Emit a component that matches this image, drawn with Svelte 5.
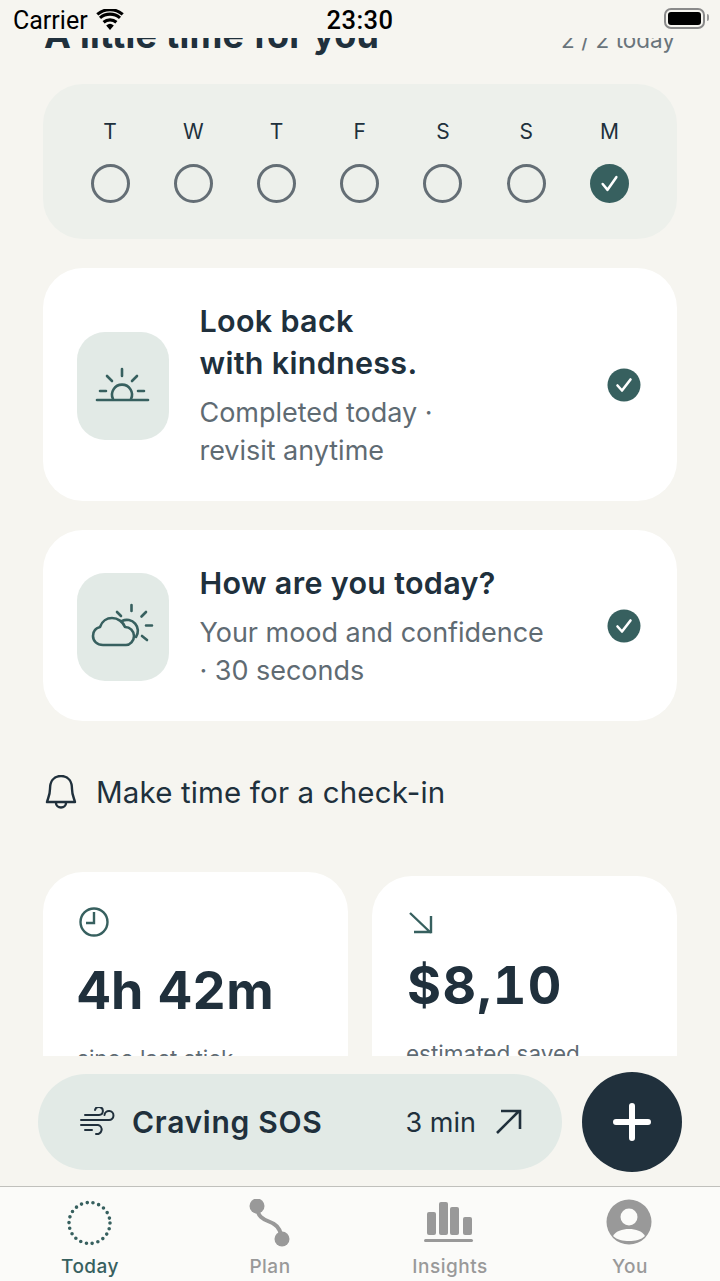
<script>
	const days = [
		{ label: 'T' },
		{ label: 'W' },
		{ label: 'T' },
		{ label: 'F' },
		{ label: 'S' },
		{ label: 'S' },
		{ label: 'M', done: true }
	];
</script>

<div class="phone">
	<header class="status">
		<div class="status-left">
			<span class="carrier">Carrier</span>
			<svg class="wifi" width="28" height="22" viewBox="0 0 28 22">
				<path d="M14 21l-3.800-4.500a5.800 5.800 0 0 1 7.600 0z" fill="#000" />
				<path d="M7.600 13.200a9.800 9.800 0 0 1 12.800 0M4 8.900a15.400 15.400 0 0 1 20 0M1.300 5.400a19.600 19.600 0 0 1 25.400 0" fill="none" stroke="#000" stroke-width="3.200" />
			</svg>
		</div>
		<span class="time">23:30</span>
		<div class="battery"><span class="battery-fill"></span></div>
	</header>

	<main class="scroll">
		<div class="content">
			<div class="section-head">
				<h2>A little time for you</h2>
				<span class="count">2 / 2 today</span>
			</div>

			<section class="week">
				{#each days as day}
					<div class="day">
						<span class="day-label">{day.label}</span>
						{#if day.done}
							<svg width="39" height="39" viewBox="0 0 40 40">
								<circle cx="20" cy="20" r="20" fill="#37605f" />
								<path d="M13 20.500l5 6 9-13" fill="none" stroke="#fff" stroke-width="2.600" stroke-linecap="round" stroke-linejoin="round" />
							</svg>
						{:else}
							<span class="ring"></span>
						{/if}
					</div>
				{/each}
			</section>

			<article class="card first">
				<div class="tile">
					<svg width="64" height="48" viewBox="91 363 64 48" fill="none" stroke="#37605f" stroke-width="2.600" stroke-linecap="round">
						<path d="M97 401H148" />
						<path d="M113 400a10 10 0 1 1 18 0" />
						<path d="M122 370v7M107 377l5 5M137 377l-5 5M100 392h6M138 392h6" />
					</svg>
				</div>
				<div class="card-text">
					<h3>Look back<br />with kindness.</h3>
					<p>Completed today ·<br />revisit anytime</p>
				</div>
				<svg class="check" width="34" height="34" viewBox="0 0 34 34">
					<circle cx="17" cy="17" r="16.500" fill="#37605f" />
					<path d="M10.500 17.500l4.500 5 8.500-11" fill="none" stroke="#fff" stroke-width="2.600" stroke-linecap="round" stroke-linejoin="round" />
				</svg>
			</article>

			<article class="card second">
				<div class="tile">
					<svg width="64" height="48" viewBox="92 603 64 48" fill="none" stroke="#37605f" stroke-width="2.600" stroke-linecap="round" stroke-linejoin="round">
						<path d="M104 645C98 645 94 641 94 636C94 631 97 628 101 627C103 621 108 618 113 618C119 618 124 622 126 627C131 627 135 631 135 636C135 641 131 645 127 645Z" />
						<path d="M123 621A11 11 0 0 1 137 637" />
						<path d="M132.500 605v6M118 612l4 4M147 612l-4.500 4.500M147 625.500h6M143 636l5 4" />
					</svg>
				</div>
				<div class="card-text">
					<h3>How are you today?</h3>
					<p>Your mood and confidence<br />· 30 seconds</p>
				</div>
				<svg class="check" width="34" height="34" viewBox="0 0 34 34">
					<circle cx="17" cy="17" r="16.500" fill="#37605f" />
					<path d="M10.500 17.500l4.500 5 8.500-11" fill="none" stroke="#fff" stroke-width="2.600" stroke-linecap="round" stroke-linejoin="round" />
				</svg>
			</article>

			<div class="reminder">
				<svg width="32" height="34" viewBox="45 775 32 34" fill="none" stroke="#20303c" stroke-width="2.400" stroke-linejoin="round" stroke-linecap="round">
					<path d="M61 776C53 776 50 782 50 789C50 795 48 798 47 802H75C74 798 72 795 72 789C72 782 69 776 61 776Z" />
					<path d="M56 803a5 4.500 0 0 0 10 0" />
				</svg>
				<span>Make time for a check-in</span>
			</div>

			<div class="stats">
				<div class="stat">
					<svg width="30" height="30" viewBox="79 907 30 30" fill="none" stroke="#37605f" stroke-width="2.400">
						<circle cx="94" cy="922" r="13.500" />
						<path d="M94 912v11h-8" />
					</svg>
					<strong>4h 42m</strong>
					<span>since last stick</span>
				</div>
				<div class="stat saved">
					<svg width="26" height="26" viewBox="408 911 26 26" fill="none" stroke="#37605f" stroke-width="2.400">
						<path d="M410 913L431 933M414 932H431V916" />
					</svg>
					<strong>$8,10</strong>
					<span>estimated saved</span>
				</div>
			</div>
		</div>
	</main>

	<div class="dock">
		<button class="sos" type="button">
			<svg width="36" height="30" viewBox="80 1107 36 30" fill="none" stroke="#20303c" stroke-width="2" stroke-linecap="round">
				<path d="M85 1115H99A4 4 0 1 0 95 1110" />
				<path d="M81 1120H109A4.500 4.500 0 1 0 104.500 1115" />
				<path d="M81 1125H98A4.500 4.500 0 1 1 96 1134" />
				<path d="M85 1130H92" />
			</svg>
			<span class="sos-label">Craving SOS</span>
			<span class="sos-time">3 min</span>
			<svg width="28" height="28" viewBox="494 1108 28 28" fill="none" stroke="#20303c" stroke-width="2.600">
				<path d="M497 1133L519 1111M501 1111H520V1129" />
			</svg>
		</button>
		<button class="fab" type="button" aria-label="Add">
			<svg width="38" height="38" viewBox="0 0 38 38" fill="none" stroke="#fff" stroke-width="6" stroke-linecap="round">
				<path d="M19 3v32M3 19h32" />
			</svg>
		</button>
	</div>

	<nav class="tabs">
		<div class="tab active">
			<svg width="48" height="48" viewBox="0 0 48 48">
				<circle cx="23.500" cy="24" r="20.500" fill="none" stroke="#37605f" stroke-width="3.600" stroke-linecap="round" stroke-dasharray="0 5.855" />
			</svg>
			<span>Today</span>
		</div>
		<div class="tab">
			<svg width="48" height="48" viewBox="246 1199 48 48">
				<path d="M257 1206C257 1220 268 1220 274 1224C279 1227 281 1232 282 1239" fill="none" stroke="#999" stroke-width="4" />
				<circle cx="257" cy="1206" r="7.500" fill="#999" />
				<circle cx="282" cy="1239" r="7.500" fill="#999" />
			</svg>
			<span>Plan</span>
		</div>
		<div class="tab">
			<svg width="52" height="48" viewBox="423 1199 52 48" fill="#999">
				<rect x="426" y="1212" width="9" height="23" rx="2" />
				<rect x="438" y="1202" width="9" height="33" rx="2" />
				<rect x="449" y="1207" width="9" height="28" rx="2" />
				<rect x="462" y="1217" width="9" height="18" rx="2" />
				<rect x="423" y="1239" width="49" height="3" rx="1.500" />
			</svg>
			<span>Insights</span>
		</div>
		<div class="tab">
			<svg width="48" height="48" viewBox="606 1199 48 48">
				<circle cx="629" cy="1222" r="22.500" fill="#999" />
				<circle cx="629" cy="1217" r="8.500" fill="#fbfbf9" />
				<path d="M613 1236C616 1231 622 1229 629 1229C636 1229 642 1231 645 1236C641 1240 635 1241 629 1241C623 1241 617 1240 613 1236Z" fill="#fbfbf9" />
			</svg>
			<span>You</span>
		</div>
	</nav>
</div>

<style>
	:global(body) {
		margin: 0;
		background: #f6f5f0;
	}
	.phone {
		width: 720px;
		height: 1281px;
		display: flex;
		flex-direction: column;
		overflow: hidden;
		background: #f6f5f0;
		color: #20303c;
		font-family: Inter, 'Noto Sans', sans-serif;
	}
	.status {
		flex: none;
		height: 38px;
		display: grid;
		grid-template-columns: 1fr auto 1fr;
		align-items: center;
		padding: 8px 13px 5px;
		box-sizing: border-box;
		color: #000;
		font-family: Roboto, sans-serif;
		font-size: 25px;
		line-height: 25px;
	}
	.status-left {
		display: flex;
		align-items: center;
		gap: 8px;
	}
	.wifi {
		margin-top: -2px;
	}
	.time {
		font-weight: 500;
		font-size: 25.500px;
		letter-spacing: 0.5px;
	}
	.battery {
		position: relative;
		justify-self: end;
		width: 41px;
		height: 21px;
		margin: -4px 2px 0 0;
		border: 2.500px solid #8a8a8a;
		border-radius: 7px;
		box-sizing: border-box;
		padding: 2px;
	}
	.battery::after {
		content: '';
		position: absolute;
		right: -6px;
		top: 4px;
		width: 2px;
		height: 7px;
		border-radius: 0 2px 2px 0;
		background: #9a9a9a;
	}
	.battery-fill {
		display: block;
		height: 100%;
		background: #000;
		border-radius: 3px;
	}
	.scroll {
		flex: none;
		height: 1018px;
		overflow: hidden;
	}
	.content {
		margin-top: -23.500px;
		padding: 0 43px;
	}
	.section-head {
		display: flex;
		justify-content: space-between;
		align-items: baseline;
		height: 40px;
		line-height: 40px;
	}
	h2 {
		margin: 0 0 0 1px;
		font-size: 36px;
		font-weight: 700;
		letter-spacing: 0.25px;
	}
	.count {
		font-size: 22.500px;
		color: #69747b;
		margin-right: 2px;
	}
	.week {
		margin-top: 29.500px;
		height: 155px;
		box-sizing: border-box;
		padding: 36px 26px 0 25.500px;
		display: grid;
		grid-template-columns: repeat(7, 1fr);
		background: #edf0eb;
		border-radius: 40px;
	}
	.day {
		display: flex;
		flex-direction: column;
		align-items: center;
		gap: 20px;
	}
	.day-label {
		height: 24px;
		line-height: 24px;
		font-size: 21px;
	}
	.ring {
		width: 39px;
		height: 39px;
		box-sizing: border-box;
		border: 3px solid #646e75;
		border-radius: 50%;
	}
	.card {
		display: flex;
		align-items: center;
		background: #fff;
		border-radius: 40px;
		padding: 0 36px 0 34px;
	}
	.first {
		margin-top: 29px;
		height: 233px;
	}
	.second {
		margin-top: 29px;
		height: 191px;
	}
	.tile {
		flex: none;
		width: 92px;
		height: 108px;
		margin-top: 2px;
		display: flex;
		align-items: center;
		justify-content: center;
		background: #e2eae6;
		border-radius: 28px;
	}
	.card-text {
		flex: 1;
		margin-left: 30.500px;
		padding-top: 1px;
	}
	h3 {
		margin: 0;
		font-size: 30.500px;
		font-weight: 600;
		line-height: 42px;
		letter-spacing: 0.3px;
	}
	.card-text p {
		margin: 10.500px 0 0;
		font-size: 27px;
		line-height: 38px;
		letter-spacing: -0.03px;
		color: #5f6b73;
	}
	.reminder {
		display: flex;
		align-items: center;
		gap: 19px;
		margin: 53px 0 0 2px;
		height: 36px;
		font-size: 29.500px;
		letter-spacing: 0.15px;
	}
	.stats {
		display: grid;
		grid-template-columns: 305px 305px;
		gap: 24px;
		margin-top: 62px;
		align-items: start;
	}
	.stat {
		display: flex;
		flex-direction: column;
		align-items: flex-start;
		background: #fff;
		border-radius: 40px;
		height: 260px;
		box-sizing: border-box;
		padding: 35px 34px 0;
	}
	.stat svg {
		margin-left: 2px;
	}
	.stat strong {
		margin-top: 24px;
		font-size: 52px;
		line-height: 60px;
		font-weight: 700;
		letter-spacing: 0.4px;
		font-variant-numeric: tabular-nums;
	}
	.stat span {
		margin-top: 22px;
		font-size: 22.500px;
		line-height: 32px;
		color: #5f6b73;
	}
	.saved {
		margin-top: 4px;
	}
	.saved strong {
		margin-top: 19px;
		margin-left: 1px;
		letter-spacing: 1.400px;
	}
	.dock {
		flex: none;
		height: 130px;
		box-sizing: border-box;
		padding: 16px 38px 0;
		display: flex;
		gap: 20px;
	}
	.sos {
		flex: none;
		width: 524px;
		height: 96px;
		margin-top: 2px;
		display: flex;
		align-items: center;
		padding: 0 40px 0 42px;
		box-sizing: border-box;
		border: 0;
		border-radius: 48px;
		background: #e2eae6;
		color: #20303c;
		font: inherit;
	}
	.sos-label {
		margin-left: 16px;
		font-size: 30px;
		font-weight: 600;
		letter-spacing: 0.7px;
	}
	.sos-time {
		margin: 0 18px 0 auto;
		font-size: 27px;
	}
	.fab {
		flex: none;
		width: 100px;
		height: 100px;
		padding: 0;
		border: 0;
		border-radius: 50%;
		background: #20303c;
		display: flex;
		align-items: center;
		justify-content: center;
	}
	.tabs {
		flex: none;
		height: 95px;
		box-sizing: border-box;
		border-top: 1px solid #c0c0bc;
		background: #fbfbf9;
		display: grid;
		grid-template-columns: repeat(4, 1fr);
		color: #999;
	}
	.tab {
		display: flex;
		flex-direction: column;
		align-items: center;
		padding-top: 12px;
		font-size: 19px;
		font-weight: 500;
		line-height: 24px;
		letter-spacing: 0.5px;
	}
	.tab span {
		margin-top: 8px;
	}
	.active {
		color: #37605f;
	}
</style>
